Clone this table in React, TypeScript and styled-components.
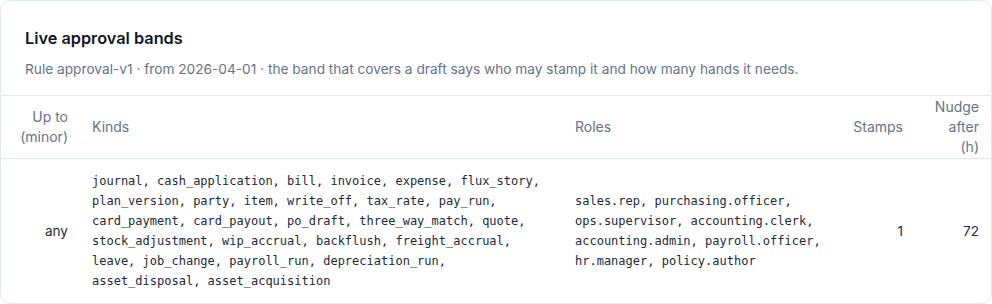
import React from 'react'
import styled, { createGlobalStyle } from 'styled-components'

const GlobalStyle = createGlobalStyle`
  html, body {
    margin: 0;
    padding: 0;
    background: #fff;
  }
  body {
    font-family: Inter, 'Noto Sans', sans-serif;
    -webkit-font-smoothing: antialiased;
  }
`

type Band = {
  upTo: string
  kinds: string[]
  roles: string[]
  stamps: number
  nudgeHours: number
}

const bands: Band[] = [
  {
    upTo: 'any',
    kinds: [
      'journal', 'cash_application', 'bill', 'invoice', 'expense', 'flux_story',
      'plan_version', 'party', 'item', 'write_off', 'tax_rate', 'pay_run',
      'card_payment', 'card_payout', 'po_draft', 'three_way_match', 'quote',
      'stock_adjustment', 'wip_accrual', 'backflush', 'freight_accrual',
      'leave', 'job_change', 'payroll_run', 'depreciation_run',
      'asset_disposal', 'asset_acquisition',
    ],
    roles: [
      'sales.rep', 'purchasing.officer', 'ops.supervisor', 'accounting.clerk',
      'accounting.admin', 'payroll.officer', 'hr.manager', 'policy.author',
    ],
    stamps: 1,
    nudgeHours: 72,
  },
]

type Align = 'left' | 'right'

const columns: { label: string; width: number; align: Align }[] = [
  { label: 'Up to (minor)', width: 79, align: 'right' },
  { label: 'Kinds', width: 483, align: 'left' },
  { label: 'Roles', width: 278, align: 'left' },
  { label: 'Stamps', width: 74, align: 'right' },
  { label: 'Nudge after (h)', width: 76, align: 'right' },
]

export default function App() {
  return (
    <>
      <GlobalStyle />
      <Card>
        <CardHeader>
          <Title>Live approval bands</Title>
          <Subtitle>
            Rule approval-v1 · from 2026-04-01 · the band that covers a draft says who may stamp
            it and how many hands it needs.
          </Subtitle>
        </CardHeader>

        <Table>
          <colgroup>
            {columns.map((c) => (
              <col key={c.label} style={{ width: c.width }} />
            ))}
          </colgroup>
          <thead>
            <tr>
              {columns.map((c) => (
                <HeadCell key={c.label} align={c.align}>
                  {c.label}
                </HeadCell>
              ))}
            </tr>
          </thead>
          <tbody>
            {bands.map((b) => (
              <tr key={b.upTo}>
                <Cell align="right">{b.upTo}</Cell>
                <Cell align="left">
                  <Mono>{b.kinds.join(', ')}</Mono>
                </Cell>
                <Cell align="left">
                  <Mono>{b.roles.join(', ')}</Mono>
                </Cell>
                <Cell align="right">{b.stamps}</Cell>
                <Cell align="right">{b.nudgeHours}</Cell>
              </tr>
            ))}
          </tbody>
        </Table>
      </Card>
    </>
  )
}

const Card = styled.section`
  width: 992px;
  box-sizing: border-box;
  border: 1px solid #e2e8f0;
  border-radius: 10px;
  background: #fff;
  overflow: hidden;
`
const CardHeader = styled.header`
  padding: 25px 24px 16px;
  border-bottom: 1px solid #e2e8f0;
`
const Title = styled.h2`
  margin: 0;
  font-size: 16.3px;
  line-height: 24px;
  font-weight: 600;
  color: #0f172a;
`
const Subtitle = styled.p`
  margin: 9px 0 0;
  font-size: 13.7px;
  line-height: 20px;
  color: #64748b;
`
const Table = styled.table`
  width: 100%;
  table-layout: fixed;
  border-collapse: collapse;
  font-size: 14px;
  line-height: 20px;
`
const HeadCell = styled.th<{ align: Align }>`
  padding: 1px 12px;
  text-align: ${({ align }) => align};
  vertical-align: middle;
  font-weight: 400;
  color: #64748b;
  border-bottom: 1px solid #e2e8f0;
`
const Cell = styled.td<{ align: Align }>`
  padding: 12px;
  text-align: ${({ align }) => align};
  vertical-align: middle;
  font-size: 13.6px;
  color: #1e293b;
`
const Mono = styled.div`
  font-family: 'DejaVu Sans Mono', monospace;
  font-size: 12px;
  line-height: 20px;
  color: #1e293b;
`
